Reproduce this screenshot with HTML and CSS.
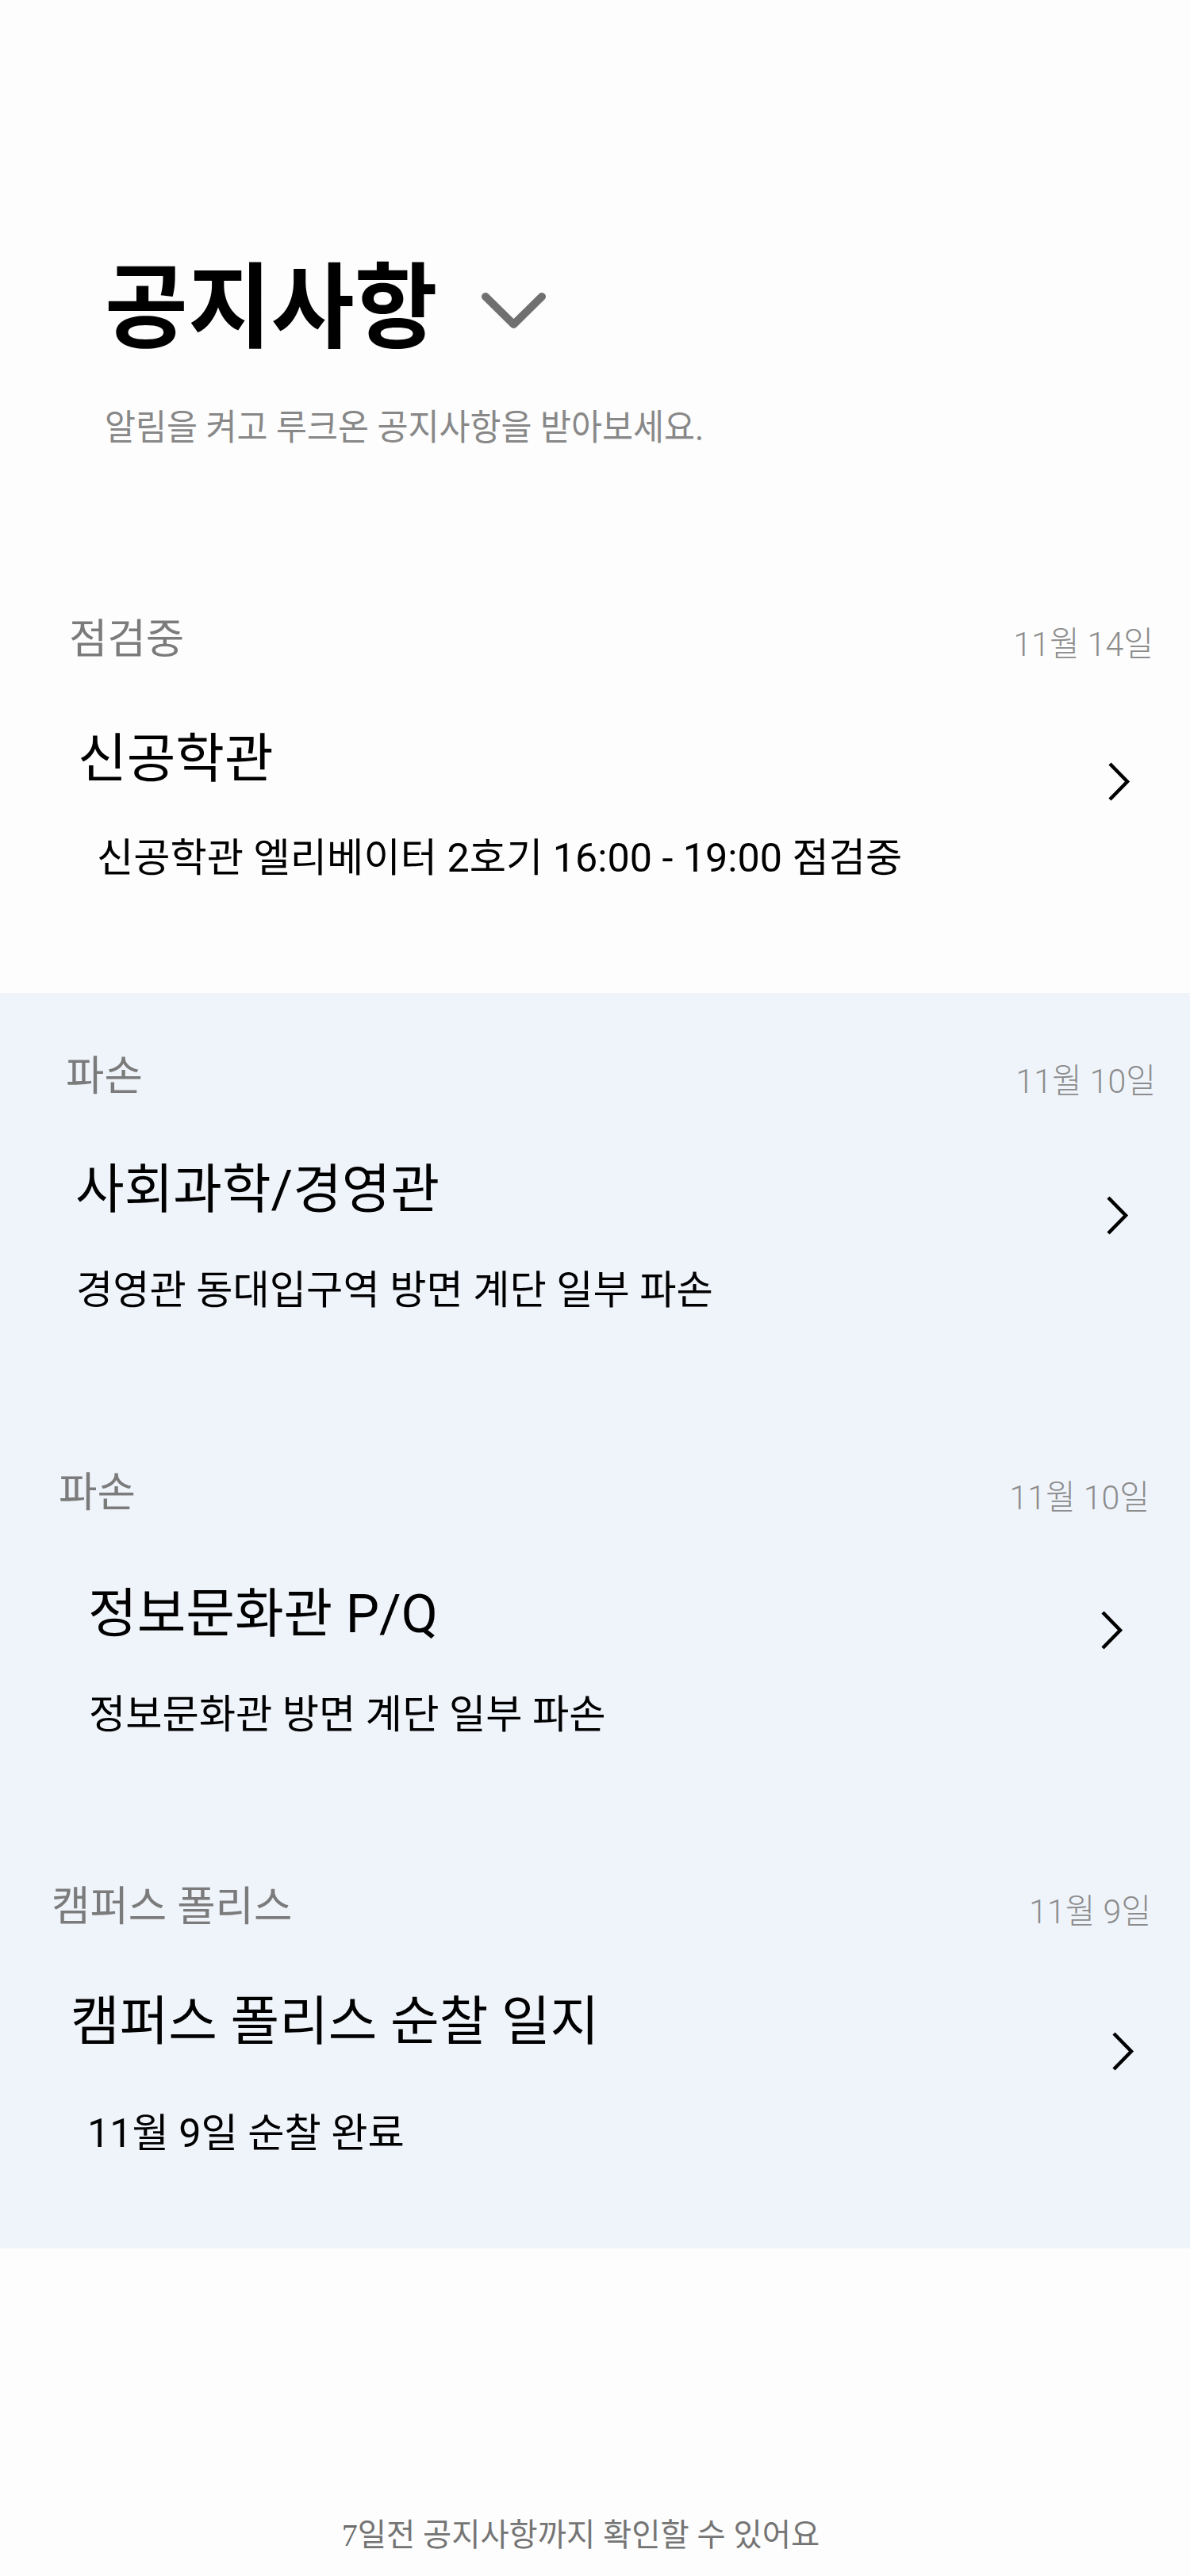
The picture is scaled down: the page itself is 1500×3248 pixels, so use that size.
FILE: index.html
```html
<!DOCTYPE html>
<html lang="ko">
<head>
<meta charset="utf-8">
<title>공지사항</title>
<link rel="stylesheet" href="styles.css">
</head>
<body>
<main class="page">
  <header class="page-header">
    <div class="title-row">
      <h1 class="page-title">공지사항</h1>
      <svg class="title-toggle" width="81" height="45" viewBox="0 0 81 45" aria-hidden="true">
        <path d="M5 5 L40.5 40 L76 5" fill="none" stroke="#707070" stroke-width="10" stroke-linecap="round" stroke-linejoin="round"/>
      </svg>
    </div>
    <p class="page-subtitle">알림을 켜고 루크온 공지사항을 받아보세요.</p>
  </header>

  <article class="notice notice--one">
    <div class="notice-head">
      <span class="notice-cat">점검중</span>
      <span class="notice-date">11월 14일</span>
    </div>
    <div class="notice-body">
      <div class="notice-text">
        <h2 class="notice-title">신공학관</h2>
        <p class="notice-desc">신공학관 엘리베이터 2호기 16:00 - 19:00 점검중</p>
      </div>
      <svg class="notice-arrow" width="28" height="49" viewBox="0 0 28 49" aria-hidden="true">
        <path d="M2 2 L24 24.5 L2 47" fill="none" stroke="#000" stroke-width="4.5" stroke-linecap="butt" stroke-linejoin="miter"/>
      </svg>
    </div>
  </article>

  <section class="band">
    <article class="notice notice--two">
      <div class="notice-head">
        <span class="notice-cat">파손</span>
        <span class="notice-date">11월 10일</span>
      </div>
      <div class="notice-body">
        <div class="notice-text">
          <h2 class="notice-title">사회과학/경영관</h2>
          <p class="notice-desc">경영관 동대입구역 방면 계단 일부 파손</p>
        </div>
        <svg class="notice-arrow" width="28" height="49" viewBox="0 0 28 49" aria-hidden="true">
          <path d="M2 2 L24 24.5 L2 47" fill="none" stroke="#000" stroke-width="4.5" stroke-linecap="butt" stroke-linejoin="miter"/>
        </svg>
      </div>
    </article>

    <article class="notice notice--three">
      <div class="notice-head">
        <span class="notice-cat">파손</span>
        <span class="notice-date">11월 10일</span>
      </div>
      <div class="notice-body">
        <div class="notice-text">
          <h2 class="notice-title">정보문화관 P/Q</h2>
          <p class="notice-desc">정보문화관 방면 계단 일부 파손</p>
        </div>
        <svg class="notice-arrow" width="28" height="49" viewBox="0 0 28 49" aria-hidden="true">
          <path d="M2 2 L24 24.5 L2 47" fill="none" stroke="#000" stroke-width="4.5" stroke-linecap="butt" stroke-linejoin="miter"/>
        </svg>
      </div>
    </article>

    <article class="notice notice--four">
      <div class="notice-head">
        <span class="notice-cat">캠퍼스 폴리스</span>
        <span class="notice-date">11월 9일</span>
      </div>
      <div class="notice-body">
        <div class="notice-text">
          <h2 class="notice-title">캠퍼스 폴리스 순찰 일지</h2>
          <p class="notice-desc">11월 9일 순찰 완료</p>
        </div>
        <svg class="notice-arrow" width="28" height="49" viewBox="0 0 28 49" aria-hidden="true">
          <path d="M2 2 L24 24.5 L2 47" fill="none" stroke="#000" stroke-width="4.5" stroke-linecap="butt" stroke-linejoin="miter"/>
        </svg>
      </div>
    </article>
  </section>

  <footer class="page-footer">
    <p class="footer-note"><span class="footer-num">7</span>일전 공지사항까지 확인할 수 있어요</p>
  </footer>
</main>
</body>
</html>
```

FILE: styles.css
```css
* {
  box-sizing: border-box;
}

html, body {
  margin: 0;
  padding: 0;
  background: #fdfdfd;
}

body {
  font-family: Roboto, "Noto Sans CJK KR", sans-serif;
  color: #000;
}

.page {
  width: 1500px;
  min-height: 3248px;
}

h1, h2, p {
  margin: 0;
  font-weight: 400;
}

/* ---------- header ---------- */
.page-header {
  padding: 331.5px 0 0 132px;
}

.title-row {
  display: flex;
  align-items: flex-start;
}

.page-title {
  font-size: 114px;
  line-height: 114px;
  font-weight: 700;
  transform: scaleY(1.03);
}

.title-toggle {
  display: block;
  margin: 37.5px 0 0 55px;
}

.page-subtitle {
  margin-top: 73px;
  font-size: 42.4px;
  line-height: 42.4px;
  color: #888888;
  transform: scaleY(1.07);
  transform-origin: 0 50%;
}

/* ---------- notices ---------- */
.notice {
  --cat-x: 87px;
  --title-x: 98px;
  --desc-x: 122px;
  --date-r: 46px;
  --arrow-r: 75px;
  --gap-title: 91.7px;
  --gap-desc: 65.85px;
  --arrow-top: 36.5px;
}

.notice--one {
  margin-top: 219.3px;
  margin-bottom: 144.3px;
}

.notice--two {
  --cat-x: 83px;
  --title-x: 95px;
  --desc-x: 96px;
  --date-r: 43px;
  --arrow-r: 77px;
  --gap-title: 83.7px;
  --gap-desc: 67.85px;
  --arrow-top: 40.5px;
}

.notice--three {
  --cat-x: 74px;
  --title-x: 111px;
  --desc-x: 112px;
  --date-r: 51px;
  --arrow-r: 84px;
  --gap-title: 93px;
  --gap-desc: 68px;
  --arrow-top: 29.5px;
  margin-top: 203.5px;
}

.notice--four {
  --cat-x: 65px;
  --title-x: 89px;
  --desc-x: 110px;
  --date-r: 49px;
  --arrow-r: 70px;
  --gap-title: 85px;
  --gap-desc: 81.5px;
  --arrow-top: 45.5px;
  margin-top: 191.5px;
}

.notice-head {
  display: flex;
  justify-content: space-between;
  align-items: flex-end;
  height: 52.6px;
  padding-left: var(--cat-x);
  padding-right: var(--date-r);
}

.notice-cat {
  display: block;
  font-size: 52.6px;
  line-height: 52.6px;
  color: #7b7b7b;
}

.notice-date {
  display: block;
  font-size: 41px;
  line-height: 41px;
  font-weight: 300;
  color: #8c8c8c;
  transform: scaleY(1.05);
}

.notice-body {
  display: flex;
  justify-content: space-between;
  align-items: flex-start;
  margin-top: var(--gap-title);
}

.notice-text {
  padding-left: var(--title-x);
}

.notice-title {
  font-size: 67px;
  line-height: 67px;
  color: #000;
}

.notice-desc {
  margin-top: var(--gap-desc);
  margin-left: calc(var(--desc-x) - var(--title-x));
  font-size: 50.3px;
  line-height: 50.3px;
  font-weight: 400;
  color: #000;
}

.notice-arrow {
  display: block;
  flex: none;
  margin-top: var(--arrow-top);
  margin-right: var(--arrow-r);
}

.band {
  background: #eff4fb;
  padding: 79.2px 0 120.4px;
}

/* ---------- footer ---------- */
.page-footer {
  padding: 341.5px 36px 0 0;
  text-align: center;
}

.footer-note {
  font-size: 39.4px;
  line-height: 39.4px;
  color: #757575;
  transform: scaleY(1.02);
}

.footer-num {
  font-family: "Liberation Serif", serif;
  font-size: 40px;
  color: #6a6a6a;
}
```
